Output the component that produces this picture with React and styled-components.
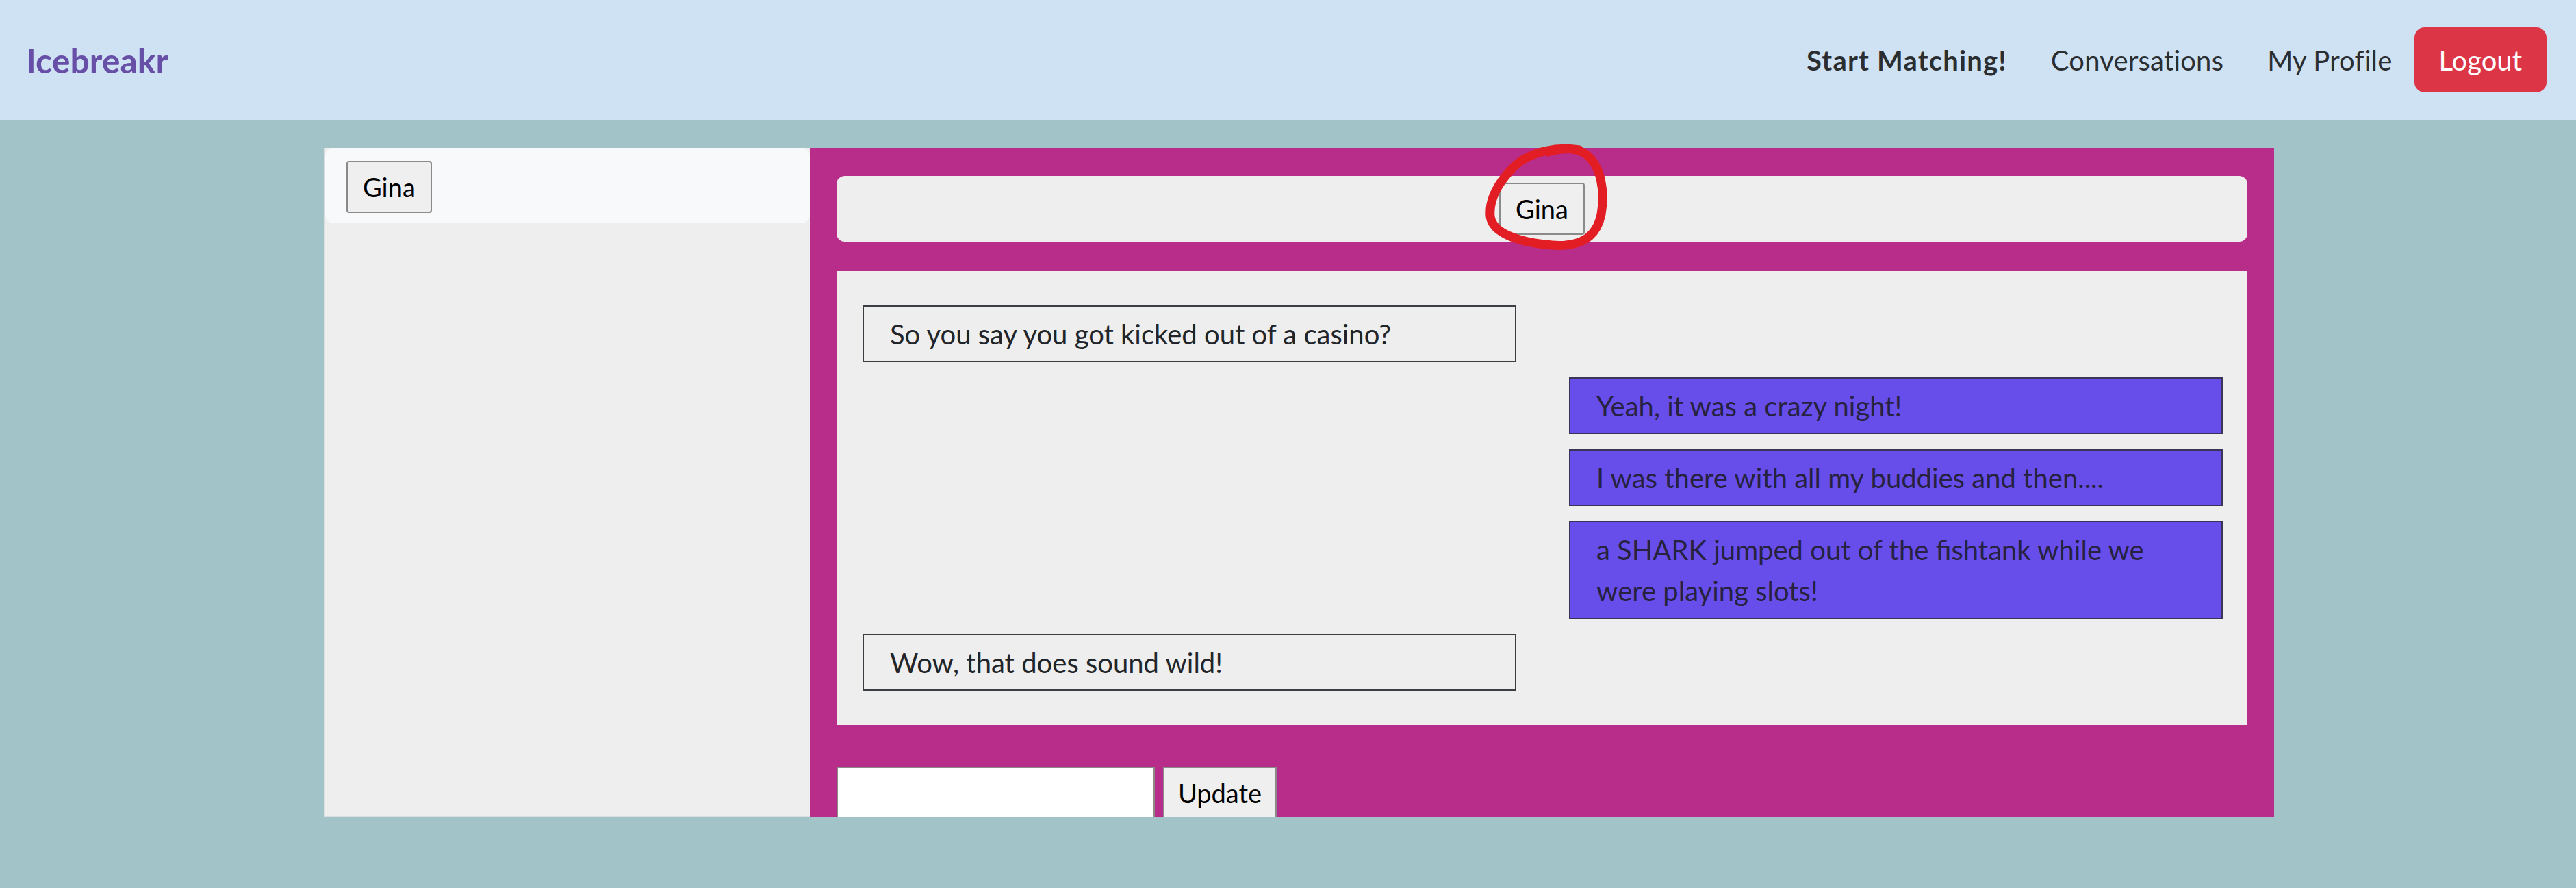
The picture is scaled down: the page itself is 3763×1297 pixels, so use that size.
import React, { useState } from "react";
import styled, { createGlobalStyle } from "styled-components";

const GlobalStyle = createGlobalStyle`
  html, body {
    margin: 0;
    padding: 0;
    background: #a2c4c9;
    font-family: "Lato", "Open Sans", sans-serif;
    color: #212529;
  }
  * {
    box-sizing: border-box;
  }
`;

const Page = styled.div`
  min-height: 100vh;
  background: #a2c4c9;
`;

const Navbar = styled.nav`
  height: 175px;
  background: #cfe2f3;
  display: flex;
  align-items: center;
  justify-content: space-between;
  padding: 0 43px 0 38px;
`;

const Brand = styled.div`
  font-size: 50px;
  font-weight: 700;
  color: #674ea7;
`;

const NavList = styled.div`
  display: flex;
  align-items: center;
`;

const NavLink = styled.a`
  font-size: 40px;
  line-height: 60px;
  padding: 0 32px;
  color: #2b2e31;
  font-weight: ${(props) => (props.$bold ? 700 : 400)};
  letter-spacing: ${(props) => (props.$bold ? "1.2px" : "0.2px")};
  text-decoration: none;
  cursor: pointer;
`;

const LogoutButton = styled.button`
  font-family: inherit;
  font-size: 40px;
  line-height: 60px;
  height: 95px;
  padding: 0 36px;
  border: none;
  border-radius: 15px;
  background: #dc3545;
  color: #fff;
  cursor: pointer;
`;

const Main = styled.main`
  display: grid;
  grid-template-columns: 710px 2139px;
  justify-content: center;
  padding: 41px 0 0 32px;
`;

const Sidebar = styled.aside`
  background: #eeeeee;
  border-left: 2px solid #d9dee1;
  border-bottom: 2px solid #d9dee1;
`;

const SidebarHeader = styled.div`
  background: #f8f9fa;
  border-radius: 12px;
  height: 110px;
  padding: 19px 31px;
`;

const PlainButton = styled.button`
  font-family: inherit;
  font-size: 38px;
  line-height: 56px;
  padding: 8px 22px;
  background: #efefef;
  color: #000;
  border: 2px solid #8a8a8a;
  border-radius: 4px;
  cursor: pointer;
`;

const ChatPanel = styled.section`
  background: #b92d8a;
  padding: 41px 39px 0 39px;
  display: flex;
  flex-direction: column;
`;

const ChatHeader = styled.div`
  background: #eeeeee;
  border-radius: 12px;
  height: 96px;
  display: flex;
  align-items: center;
  justify-content: center;
`;

const Marked = styled.span`
  position: relative;
  display: inline-flex;
`;

const Scribble = styled.svg`
  position: absolute;
  left: -33px;
  top: -69px;
  width: 200px;
  height: 185px;
  pointer-events: none;
  overflow: visible;
`;

const MessageArea = styled.div`
  background: #eeeeee;
  margin-top: 43px;
  padding: 50px 36px 50px 38px;
  display: flex;
  flex-direction: column;
  gap: 22px;
`;

const MessageRow = styled.div`
  display: flex;
  justify-content: ${(props) => (props.$mine ? "flex-end" : "flex-start")};
`;

const Bubble = styled.div`
  width: 955px;
  font-size: 40px;
  line-height: 60px;
  padding: 10px 38px 9px;
  border: 2px solid ${(props) => (props.$mine ? "#3a3556" : "#3a3d42")};
  background: ${(props) => (props.$mine ? "#674eeb" : "#eeeeee")};
  color: ${(props) => (props.$mine ? "#26223f" : "#212529")};
`;

const MessageForm = styled.form`
  display: flex;
  gap: 12px;
  margin-top: 61px;
`;

const TextInput = styled.input`
  width: 465px;
  height: 74px;
  border: 2px solid #8a8a8a;
  border-bottom: none;
  background: #fff;
  font-size: 38px;
  font-family: inherit;
  padding: 0 10px;
`;

const UpdateButton = styled(PlainButton)`
  height: 74px;
  width: 166px;
  padding: 0;
  border-radius: 0;
  border-bottom: none;
`;

const messages = [
  { id: 1, mine: false, text: "So you say you got kicked out of a casino?" },
  { id: 2, mine: true, text: "Yeah, it was a crazy night!" },
  { id: 3, mine: true, text: "I was there with all my buddies and then...." },
  {
    id: 4,
    mine: true,
    text: "a SHARK jumped out of the fishtank while we were playing slots!",
  },
  { id: 5, mine: false, text: "Wow, that does sound wild!" },
];

const App = () => {
  const [draft, setDraft] = useState("");

  return (
    <Page>
      <GlobalStyle />
      <Navbar>
        <Brand>Icebreakr</Brand>
        <NavList>
          <NavLink $bold>Start Matching!</NavLink>
          <NavLink>Conversations</NavLink>
          <NavLink>My Profile</NavLink>
          <LogoutButton>Logout</LogoutButton>
        </NavList>
      </Navbar>
      <Main>
        <Sidebar>
          <SidebarHeader>
            <PlainButton>Gina</PlainButton>
          </SidebarHeader>
        </Sidebar>
        <ChatPanel>
          <ChatHeader>
            <Marked>
              <PlainButton>Gina</PlainButton>
              {/* hand-drawn red loop around the selected name */}
              <Scribble viewBox="0 0 200 185">
                <path
                  d="M 150 21 C 120 16, 80 22, 55 45 C 30 70, 18 95, 20 118 C 23 142, 60 156, 110 160 C 150 163, 175 150, 182 115 C 188 80, 181 46, 163 30 C 150 18, 128 17, 104 24"
                  fill="none"
                  stroke="#e21d24"
                  strokeWidth="13"
                  strokeLinecap="round"
                  strokeLinejoin="round"
                />
              </Scribble>
            </Marked>
          </ChatHeader>
          <MessageArea>
            {messages.map((m) => (
              <MessageRow key={m.id} $mine={m.mine}>
                <Bubble $mine={m.mine}>{m.text}</Bubble>
              </MessageRow>
            ))}
          </MessageArea>
          <MessageForm onSubmit={(e) => e.preventDefault()}>
            <TextInput
              value={draft}
              onChange={(e) => setDraft(e.target.value)}
            />
            <UpdateButton type="submit">Update</UpdateButton>
          </MessageForm>
        </ChatPanel>
      </Main>
    </Page>
  );
};

export default App;
